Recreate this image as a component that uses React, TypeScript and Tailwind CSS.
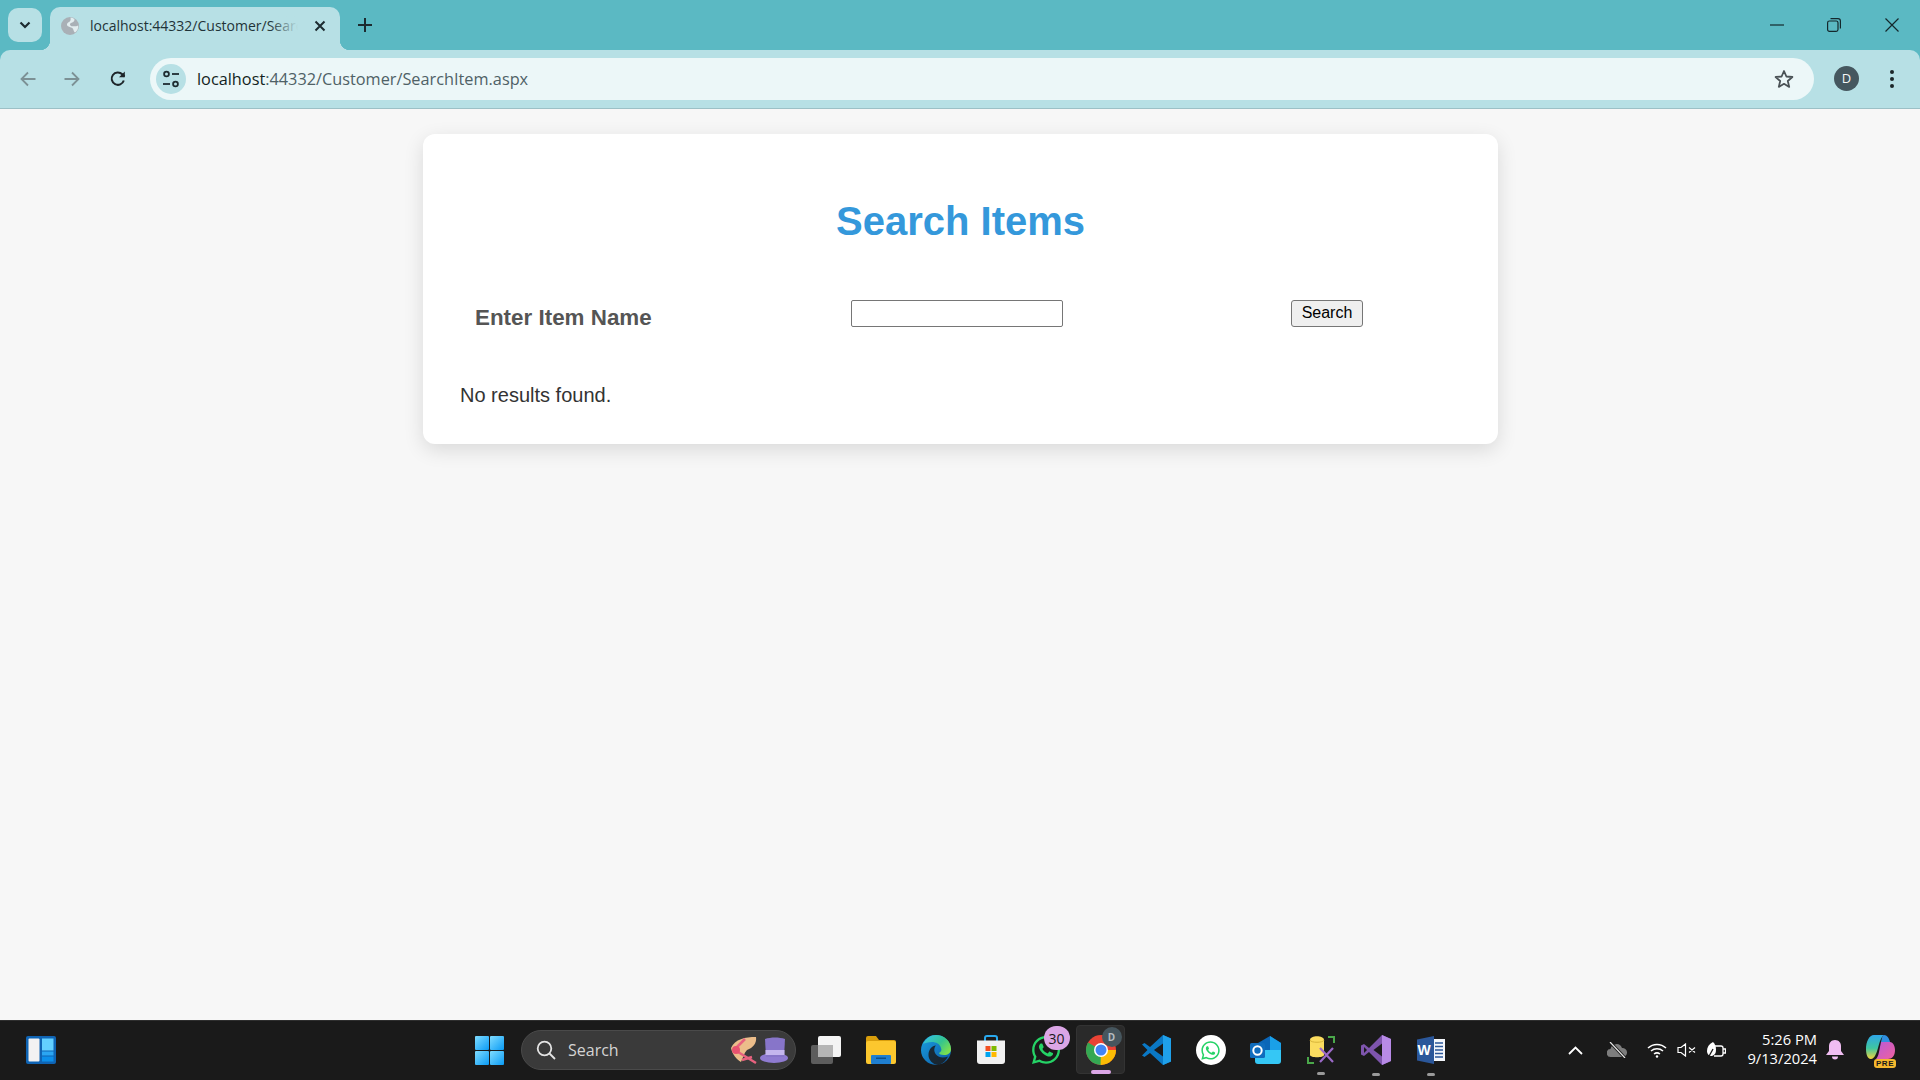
import React from "react";
import { FaWhatsapp } from "react-icons/fa";

const segoe = "font-['Open_Sans','Noto_Sans',sans-serif]";

function Chevron() {
  return (
    <svg width="14" height="14" viewBox="0 0 14 14" fill="none" stroke="#1c2b30" strokeWidth="2.2">
      <path d="M2.500 4.500 7 9l4.500-4.500" />
    </svg>
  );
}

function Globe() {
  return (
    <svg width="18" height="18" viewBox="0 0 18 18">
      <circle cx="9" cy="9" r="9" fill="#a9b0b6" />
      <path d="M9.500.6c1.500.2 3 .8 4 1.700.2 1.500-.8 2.700-2.300 3.200-1.700.6-2.700 1.500-2 2.700.6 1 2 1 3.500 1 1.800 0 3.300-.2 4.600-.8.200 2.800-1 5.300-3 7-1-.2-1.600-1.500-2-3-.4-1.300-2-1.800-3.500-2.300-1.700-.5-3.300-1.300-2.800-3 .4-1.300 1.800-1.700 2.800-2.500C9.700 3.700 9.800 2.300 9.500.6Z" fill="#e2edef" />
    </svg>
  );
}

function Tune() {
  return (
    <svg width="20" height="20" viewBox="0 0 20 20" fill="none" stroke="#1d2b30" strokeWidth="1.800">
      <circle cx="5.500" cy="5" r="2.400" />
      <path d="M11 5h7" />
      <circle cx="14.500" cy="15" r="2.400" />
      <path d="M2 15h7" />
    </svg>
  );
}

function Arrow({ flip, color }: { flip?: boolean; color: string }) {
  return (
    <svg width="18" height="18" viewBox="0 0 18 18" fill="none" stroke={color} strokeWidth="1.800" className={flip ? "rotate-180" : ""}>
      <path d="M16.500 9H2.500M9 2.500 2.500 9 9 15.500" />
    </svg>
  );
}

function Reload() {
  return (
    <svg width="18" height="18" viewBox="0 0 18 18" fill="none" stroke="#1d2529" strokeWidth="2">
      <path d="M14.800 10.500A6.200 6.200 0 1 1 13.300 4.300L15.500 6.500" />
      <path d="M15.800 1.500v5.800H10Z" fill="#1d2529" stroke="none" />
    </svg>
  );
}

function Star() {
  return (
    <svg width="20" height="20" viewBox="0 0 20 20" fill="none" stroke="#4a5256" strokeWidth="1.800" strokeLinejoin="round">
      <path d="m10 2 2.400 5.500 6 .5-4.600 4 1.400 5.900L10 14.800l-5.200 3.100L6.200 12 1.600 8l6-.5Z" />
    </svg>
  );
}

function WinStart() {
  return (
    <svg width="29" height="29" viewBox="0 0 29 29">
      <defs>
        <linearGradient id="ws" x1="0" y1="0" x2="1" y2="1">
          <stop offset="0" stopColor="#7fdcff" />
          <stop offset="1" stopColor="#0a9bf5" />
        </linearGradient>
      </defs>
      <rect x="0" y="0" width="14" height="14" rx="1" fill="url(#ws)" />
      <rect x="15" y="0" width="14" height="14" rx="1" fill="url(#ws)" />
      <rect x="0" y="15" width="14" height="14" rx="1" fill="url(#ws)" />
      <rect x="15" y="15" width="14" height="14" rx="1" fill="url(#ws)" />
    </svg>
  );
}

function Widgets() {
  return (
    <svg width="30" height="28" viewBox="0 0 30 28">
      <rect width="30" height="28" rx="2" fill="#0f64b4" />
      <rect x="2.500" y="2.500" width="11" height="23" rx="1" fill="#f2f2f2" />
      <rect x="16" y="2.500" width="11.500" height="12" fill="#63d0ff" />
      <rect x="16" y="15.500" width="11.500" height="4" fill="#2ba6f2" />
      <rect x="16" y="20.500" width="11.500" height="5" fill="#0c8fea" />
    </svg>
  );
}

function TaskView() {
  return (
    <svg width="30" height="28" viewBox="0 0 30 28">
      <rect x="0" y="9" width="22" height="19" rx="2" fill="#5d5d5d" />
      <rect x="7" y="0" width="23" height="21" rx="2" fill="#f4f4f4" />
      <rect x="7" y="9" width="15" height="12" fill="#b5b5b5" />
    </svg>
  );
}

function Explorer() {
  return (
    <svg width="30" height="28" viewBox="0 0 30 28">
      <path d="M0 2a2 2 0 0 1 2-2h8l3 4h15a2 2 0 0 1 2 2v4H0Z" fill="#d99e0c" />
      <rect x="0" y="5" width="30" height="23" rx="2" fill="#fcc72e" />
      <rect x="5" y="19" width="20" height="9" rx="1" fill="#1f7fd1" />
      <rect x="10" y="21.500" width="10" height="1.500" fill="#0c4f8c" />
    </svg>
  );
}

function Edge() {
  return (
    <svg width="30" height="30" viewBox="0 0 30 30">
      <defs>
        <linearGradient id="eg" x1="0" y1="0" x2="1" y2="0.700">
          <stop offset="0" stopColor="#35c1f1" />
          <stop offset="0.600" stopColor="#34c48f" />
          <stop offset="1" stopColor="#7ce04e" />
        </linearGradient>
        <linearGradient id="eb" x1="0" y1="0" x2="1" y2="1">
          <stop offset="0" stopColor="#1a9fe0" />
          <stop offset="1" stopColor="#0c59a4" />
        </linearGradient>
      </defs>
      <circle cx="15" cy="15" r="15" fill="url(#eb)" />
      <path d="M2 9C5 3 10 0 15 0c8 0 15 6 15 14 0 4-3 6-7 6-3 0-5-1-5-2 2-1 3-3 2-5-1-4-5-6-9-6-4 0-7 1-9 2Z" fill="url(#eg)" />
      <path d="M18 30c-6 0-11-5-10.500-11C8 14 11 11 15 10.500c-2 2-2.500 6 0 9 2.500 3 7 4 12 2-2 4-5 7-9 8.500Z" fill="#1b1b1b" opacity="0.85" />
    </svg>
  );
}

function Store() {
  return (
    <svg width="30" height="30" viewBox="0 0 30 30">
      <path d="M9 7V3a2 2 0 0 1 2-2h8a2 2 0 0 1 2 2v4" fill="none" stroke="#29a9ee" strokeWidth="2" />
      <path d="M1 5.500h28V26a3 3 0 0 1-3 3H4a3 3 0 0 1-3-3Z" fill="#f1f1f1" />
      <rect x="9.500" y="11" width="5" height="5" fill="#f25022" />
      <rect x="15.500" y="11" width="5" height="5" fill="#7fba00" />
      <rect x="9.500" y="17" width="5" height="5" fill="#00a4ef" />
      <rect x="15.500" y="17" width="5" height="5" fill="#ffb900" />
    </svg>
  );
}

function Chrome() {
  return (
    <svg width="30" height="30" viewBox="0 0 30 30">
      <circle cx="15" cy="15" r="15" fill="#ea4335" />
      <path d="M15 15H30A15 15 0 0 1 15 30L15 30 8.500 26Z" fill="#fbbc04" />
      <path d="M2 7.500 15 15l-6.500 11.300-.5 2A15 15 0 0 1 2 7.500Z" fill="#34a853" />
      <path d="M2.500 22 9 11l6 4-.5 15A15 15 0 0 1 2.500 22Z" fill="#34a853" />
      <circle cx="15" cy="15" r="7" fill="#fff" />
      <circle cx="15" cy="15" r="5.500" fill="#4285f4" />
    </svg>
  );
}

function VSCode() {
  return (
    <svg width="30" height="30" viewBox="0 0 30 30">
      <path d="M22 0 30 3.500V26.500L22 30 9 18l-5.500 4L1 20.500l5.500-5.500L1 9.500 3.500 8 9 12Z" fill="#0a78c5" />
      <path d="M22 0 30 3.500V26.500L22 30Z" fill="#1fa0ea" />
      <path d="M22 8.500V21.500L13 15Z" fill="#1b1b1b" />
    </svg>
  );
}

function Outlook() {
  return (
    <svg width="31" height="28" viewBox="0 0 31 28">
      <path d="M8 7 20 0l11 7v16H8Z" fill="#0a66b8" />
      <path d="M20 0l11 7v9H20Z" fill="#1aa0e8" />
      <path d="M5 14h26v11a3 3 0 0 1-3 3H8a3 3 0 0 1-3-3Z" fill="#35c7f5" />
      <rect x="0" y="7" width="15" height="15" rx="1.500" fill="#0f6cbd" />
      <circle cx="7.500" cy="14.500" r="4.200" fill="none" stroke="#fff" strokeWidth="2" />
    </svg>
  );
}

function DbTool() {
  return (
    <svg width="28" height="28" viewBox="0 0 28 28">
      <path d="M1 21v6h6M21 1h6v6" fill="none" stroke="#4aa84a" strokeWidth="2" />
      <path d="M3 4c0-5 14-5 14 0v15c0 3-14 3-14 0Z" fill="#fbdc5f" />
      <path d="M3 4c0 3 14 3 14 0" fill="none" stroke="#d8b53a" strokeWidth="1" />
      <path d="m13 12 13 14M26 12 13 26" stroke="#9b6ac8" strokeWidth="2.200" />
    </svg>
  );
}

function VStudio() {
  return (
    <svg width="30" height="30" viewBox="0 0 30 30">
      <path d="M21 0 30 4V26l-9 4L8 17 3 21 0 19.500V10.500L3 9l5 4Z" fill="#7e55ad" />
      <path d="M21 0 30 4V26l-9 4Z" fill="#b78ae6" />
      <path d="M21 8.500v13L12.500 15Z" fill="#1b1b1b" />
      <path d="M3 12v6l3-3Z" fill="#1b1b1b" />
    </svg>
  );
}

function Word() {
  return (
    <div className="relative h-[28px] w-[28px]">
      <svg width="28" height="28" viewBox="0 0 28 28">
        <rect x="8" y="3" width="20" height="22" fill="#f3f6fb" />
        <path d="M18 7h8M18 10.500h8M18 14h8M18 17.500h8M18 21h8" stroke="#2b579a" strokeWidth="1.600" />
        <path d="M0 3.500 17 0v28L0 24.500Z" fill="#2b579a" />
      </svg>
      <span className="absolute left-[1px] top-[6px] text-[14px] font-bold leading-[16px] text-white">W</span>
    </div>
  );
}

function Copilot() {
  return (
    <svg width="29" height="30" viewBox="0 0 29 30">
      <defs>
        <linearGradient id="cp1" x1="0" y1="0" x2="0" y2="1">
          <stop offset="0" stopColor="#2fa6e8" />
          <stop offset="0.550" stopColor="#3fc7a0" />
          <stop offset="1" stopColor="#f3d23b" />
        </linearGradient>
        <linearGradient id="cp2" x1="0" y1="0" x2="1" y2="1">
          <stop offset="0" stopColor="#b85bd8" />
          <stop offset="1" stopColor="#f0609e" />
        </linearGradient>
      </defs>
      <path d="M8 0h10c-3 2-4 6-6 13s-4 11-7 11C1 24 0 18 0 14 0 7 3 0 8 0Z" fill="url(#cp1)" />
      <path d="M18 0c3 0 5 3 6 7H15c1-3 1-7 3-7Z" fill="#2f8fe0" />
      <path d="M15 7h9c3 0 5 4 5 8 0 6-3 9-7 9H10c3-3 3-8 5-17Z" fill="url(#cp2)" />
    </svg>
  );
}

function Hats() {
  return (
    <svg width="58" height="29" viewBox="0 0 58 29">
      <path d="M1 12C5 3 15 1 26 1c1 6-3 11-9 13-3 3-4 8-6 12C7 24 2 18 1 12Z" fill="#ecbd8a" />
      <path d="M7 11 15 3" stroke="#e8627f" strokeWidth="2.500" fill="none" />
      <path d="M8 16 26 27M12 24l10-3" stroke="#e8627f" strokeWidth="2.500" fill="none" />
      <circle cx="6" cy="14" r="4" fill="#e8526f" />
      <ellipse cx="44" cy="22" rx="14" ry="5" fill="#8f7bd1" />
      <path d="M35 3c6-2 14-2 20 0l-1 18H36Z" fill="#8775c9" />
      <rect x="35.500" y="14" width="19" height="5" fill="#c4b6ee" />
    </svg>
  );
}

function TaskIcon({ children, active }: { children?: React.ReactNode; active?: boolean }) {
  return (
    <div className="relative flex h-[50px] w-[55px] shrink-0 items-center justify-center">
      {active && <div className="absolute left-[3px] top-0 h-[49px] w-[49px] rounded-[4px] border border-[#333] bg-[#2a2a2a]" />}
      <div className="relative flex items-center justify-center">{children}</div>
    </div>
  );
}

export default function App() {
  return (
    <div className="flex h-screen w-full flex-col overflow-hidden bg-[#f7f7f7] font-['Liberation_Sans',Arial,sans-serif]">
      {/* Tab strip */}
      <header className="flex h-[50px] shrink-0 items-end bg-[#5bb9c3]">
        <div className="mb-[8px] ml-[8px] flex h-[34px] w-[34px] items-center justify-center rounded-[10px] bg-[#b7e0e5]">
          <Chevron />
        </div>
        <div className="relative ml-[8px] flex h-[43px] w-[290px] items-center rounded-t-[10px] bg-[#b7e0e5] pb-[6px] pl-[11px]">
          <div className="absolute -left-[10px] bottom-0 h-[10px] w-[10px] bg-[radial-gradient(circle_at_0_0,#5bb9c3_10px,#b7e0e5_10.500px)]" />
          <div className="absolute -right-[10px] bottom-0 h-[10px] w-[10px] bg-[radial-gradient(circle_at_100%_0,#5bb9c3_10px,#b7e0e5_10.500px)]" />
          <Globe />
          <div className={`relative ml-[11px] w-[208px] overflow-hidden whitespace-nowrap text-[14px] leading-[20px] text-[#1f3338] ${segoe}`}>
            localhost:44332/Customer/SearchItem.aspx
            <div className="absolute right-0 top-0 h-full w-[28px] bg-gradient-to-r from-transparent to-[#b7e0e5]" />
          </div>
          <svg className="ml-[16px]" width="12" height="12" viewBox="0 0 12 12" stroke="#1c2b30" strokeWidth="2">
            <path d="M1.500 1.500 10.500 10.500M10.500 1.500 1.500 10.500" />
          </svg>
        </div>
        <svg className="mb-[18px] ml-[18px]" width="14" height="14" viewBox="0 0 14 14" stroke="#1c2b30" strokeWidth="2">
          <path d="M7 0v14M0 7h14" />
        </svg>
        <div className="ml-auto flex h-[50px] items-center pr-[21px]">
          <svg width="14" height="2" viewBox="0 0 14 2" stroke="#14282c" strokeWidth="1.200"><path d="M0 1h14" /></svg>
          <svg className="ml-[43px]" width="14" height="14" viewBox="0 0 14 14" fill="none" stroke="#14282c" strokeWidth="1.200">
            <rect x="0.600" y="3" width="10.400" height="10.400" rx="1.800" />
            <path d="M3.500.6H11a2.400 2.400 0 0 1 2.400 2.400v7.500" />
          </svg>
          <svg className="ml-[44px]" width="14" height="14" viewBox="0 0 14 14" stroke="#14282c" strokeWidth="1.200">
            <path d="M.5.500l13 13M13.500.500l-13 13" />
          </svg>
        </div>
      </header>

      {/* Toolbar */}
      <div className="flex h-[59px] shrink-0 items-center border-b border-[#9cc0c6] bg-[#5bb9c3]">
        <div className="flex h-full w-full items-center rounded-t-[10px] bg-[#b7e0e5] pb-[1px] pl-[19px] pr-[26px]">
          <Arrow color="#7c9195" />
          <div className="ml-[26px]"><Arrow flip color="#7c9195" /></div>
          <div className="ml-[28px]"><Reload /></div>
          <div className="ml-[23px] flex h-[42px] flex-1 items-center rounded-full bg-[#ecf7f8] pl-[6px] pr-[20px]">
            <div className="flex h-[30px] w-[30px] items-center justify-center rounded-full bg-[#b7e0e5]">
              <Tune />
            </div>
            <div className={`ml-[11px] whitespace-nowrap text-[16.300px] leading-[24px] text-[#4f6166] ${segoe}`}>
              <span className="text-[#131f22]">localhost</span>:44332/Customer/SearchItem.aspx
            </div>
            <div className="ml-auto"><Star /></div>
          </div>
          <div className={`ml-[20px] flex h-[25px] w-[25px] items-center justify-center rounded-full bg-[#45575f] text-[13px] text-[#f4f6f6] ${segoe}`}>D</div>
          <svg className="ml-[31px]" width="4" height="18" viewBox="0 0 4 18" fill="#1c2629">
            <circle cx="2" cy="2" r="2" /><circle cx="2" cy="9" r="2" /><circle cx="2" cy="16" r="2" />
          </svg>
        </div>
      </div>

      {/* Page */}
      <main className="flex-1">
        <section className="ml-[423px] mt-[25px] h-[310px] w-[1075px] rounded-[12px] bg-white pt-[64px] shadow-[0_6px_20px_rgba(0,0,0,0.12)]">
          <h1 className="text-center text-[40px] font-bold leading-[46px] text-[#3498db]">Search Items</h1>
          <div className="mt-[56px] flex h-[27px] items-start">
            <label className="ml-[52px] mt-[3px] w-[376px] text-[22.400px] font-bold leading-[30px] text-[#555]">Enter Item Name</label>
            <input type="text" className="h-[27px] w-[212px] rounded-[2px] border border-[#767676] bg-white" />
            <button className="ml-[228px] h-[27px] w-[72px] rounded-[3px] border border-[#767676] bg-[#efefef] pb-[2px] text-[16px] leading-[20px] text-black">Search</button>
          </div>
          <p className="ml-[37px] mt-[54px] text-[20px] leading-[28px] text-[#333]">No results found.</p>
        </section>
      </main>

      {/* Taskbar */}
      <footer className="flex h-[60px] shrink-0 items-center border-t border-[#2e2e2e] bg-[#1a1a1a] pb-[1px] text-white">
        <div className="ml-[26px] w-[435px]"><Widgets /></div>
        <div className="flex w-[55px] justify-center pl-[1px]"><WinStart /></div>
        <div className="ml-[5px] flex h-[40px] w-[275px] items-center rounded-full border border-[#4a4a4a] bg-[#3a3a3a] pl-[14px]">
          <svg width="20" height="20" viewBox="0 0 20 20" fill="none" stroke="#e4e4e4" strokeWidth="1.800">
            <circle cx="8.500" cy="8.500" r="6.800" /><path d="m13.500 13.500 5.500 5.500" />
          </svg>
          <span className={`ml-[12px] text-[16px] text-[#d4d4d4] ${segoe}`}>Search</span>
          <div className="ml-[111px]"><Hats /></div>
        </div>
        <div className="ml-[2px] flex items-center">
          <TaskIcon><TaskView /></TaskIcon>
          <TaskIcon><Explorer /></TaskIcon>
          <TaskIcon><Edge /></TaskIcon>
          <TaskIcon><Store /></TaskIcon>
          <TaskIcon>
            <FaWhatsapp size={32} color="#25d366" />
            <span className={`absolute -right-[8px] -top-[8px] flex h-[24px] w-[26px] items-center justify-center rounded-full bg-[#dba6e6] text-[14px] text-[#1a1a1a] ${segoe}`}>30</span>
          </TaskIcon>
          <TaskIcon active>
            <Chrome />
            <span className={`absolute -right-[6px] -top-[8px] flex h-[20px] w-[20px] items-center justify-center rounded-full bg-[#46565e] text-[10px] font-bold text-[#b4bcc0] ${segoe}`}>D</span>
            <span className="absolute -bottom-[9px] left-[5px] h-[4px] w-[20px] rounded-full bg-[#dba6e6]" />
          </TaskIcon>
          <TaskIcon><VSCode /></TaskIcon>
          <TaskIcon>
            <div className="flex h-[30px] w-[30px] items-center justify-center rounded-full bg-white">
              <FaWhatsapp size={21} color="#25d366" />
            </div>
          </TaskIcon>
          <TaskIcon><Outlook /></TaskIcon>
          <TaskIcon>
            <DbTool />
            <span className="absolute -bottom-[11px] left-[10px] h-[3px] w-[8px] rounded-full bg-[#9a9a9a]" />
          </TaskIcon>
          <TaskIcon>
            <VStudio />
            <span className="absolute -bottom-[11px] left-[11px] h-[3px] w-[8px] rounded-full bg-[#9a9a9a]" />
          </TaskIcon>
          <TaskIcon>
            <Word />
            <span className="absolute -bottom-[12px] left-[10px] h-[3px] w-[8px] rounded-full bg-[#9a9a9a]" />
          </TaskIcon>
        </div>

        {/* Tray */}
        <div className="ml-[110px] flex items-center">
          <svg width="15" height="9" viewBox="0 0 15 9" fill="none" stroke="#fff" strokeWidth="1.800"><path d="m1 8 6.500-6.500L14 8" /></svg>
          <svg className="ml-[24px]" width="20" height="16" viewBox="0 0 20 16">
            <path d="M4 15a4 4 0 0 1-.5-8A6 6 0 0 1 15 6a4.500 4.500 0 0 1 1 9Z" fill="#7d7d7d" />
            <path d="M3 0 18 16" stroke="#1a1a1a" strokeWidth="3" />
            <path d="M3 0 18 16" stroke="#e8e8e8" strokeWidth="1.200" />
          </svg>
          <svg className="ml-[20px]" width="20" height="15" viewBox="0 0 20 15" fill="none" stroke="#fff" strokeWidth="1.500">
            <path d="M1 5a13 13 0 0 1 18 0M4 8a9 9 0 0 1 12 0M7 11a5 5 0 0 1 6 0" />
            <circle cx="10" cy="13.500" r="1.200" fill="#fff" stroke="none" />
          </svg>
          <svg className="ml-[10px]" width="19" height="14" viewBox="0 0 19 14" fill="none" stroke="#fff" strokeWidth="1.200">
            <path d="M1 4.500h3L8.500 1v12L4 9.500H1ZM12 4.500l6 5M18 4.500l-6 5" />
          </svg>
          <svg className="ml-[10px]" width="20" height="18" viewBox="0 0 20 18" fill="none" stroke="#fff" strokeWidth="1.300">
            <path d="M9 5h6a2 2 0 0 1 2 2v6a2 2 0 0 1-2 2H8M17.500 8h2v4h-2" />
            <path d="M7 1C3 3 1 6 1 10c0 3 2 5 5 5 3-1 4-3 4-6 0-4-1-6-3-8Z" fill="#fff" stroke="none" />
            <path d="M2 17 7 8" stroke="#1a1a1a" />
          </svg>
          <div className={`ml-[11px] mb-[2px] w-[80px] text-right text-[14.700px] leading-[19px] text-white ${segoe}`}>
            <div>5:26 PM</div>
            <div>9/13/2024</div>
          </div>
          <svg className="ml-[9px]" width="18" height="20" viewBox="0 0 18 20" fill="#f0bdf2">
            <path d="M9 0c4 0 6 3 6 6v5l3 4H0l3-4V6c0-3 2-6 6-6Z" />
            <path d="M6 16.500h6a3 3 0 0 1-6 0Z" />
          </svg>
          <div className="relative ml-[22px] h-[30px] w-[29px]">
            <Copilot />
            <span className="absolute -bottom-[3px] right-[-1px] flex h-[9px] w-[22px] items-center justify-center rounded-[3px] bg-[#f5b82e] text-[8px] font-bold leading-none tracking-[0.5px] text-[#1a1a1a]">PRE</span>
          </div>
        </div>
      </footer>
    </div>
  );
}
